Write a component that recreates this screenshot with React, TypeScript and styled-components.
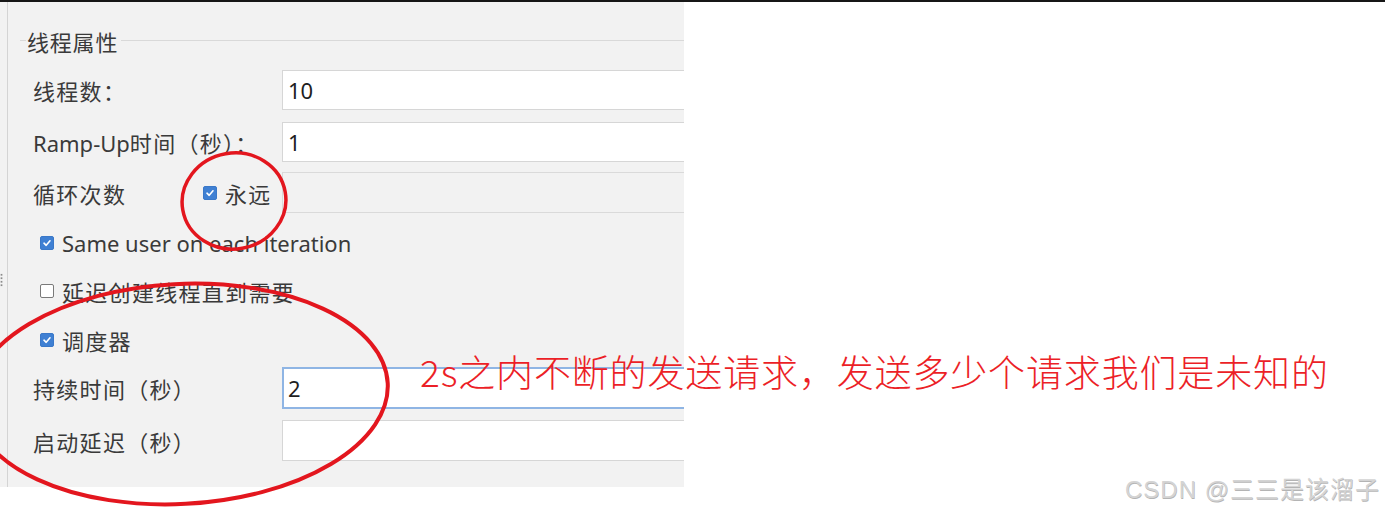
import React from "react";
import styled, { createGlobalStyle } from "styled-components";

const Global = createGlobalStyle`
  html, body { margin: 0; padding: 0; background: #ffffff; }
  body { font-family: "Noto Sans", "Noto Sans CJK SC", sans-serif; }
`;

const Page = styled.div`
  position: relative;
  width: 1385px;
  height: 511px;
  overflow: hidden;
  background: #ffffff;
`;

const TopBar = styled.div`
  height: 2px;
  background: #161616;
`;

const Panel = styled.div`
  position: relative;
  width: 684px;
  height: 485px;
  background: #f2f2f2;
  overflow: hidden;
  padding-left: 7px;
  box-sizing: border-box;
`;

const Grip = styled.div`
  position: absolute;
  left: 0;
  top: 271px;
  width: 3px;
  height: 14px;
  background-image: radial-gradient(circle, #8a8a8a 0.9px, transparent 1.2px);
  background-size: 3px 3.5px;
`;

const Inner = styled.div`
  height: 100%;
  border-left: 1px solid #d4d4d4;
  display: flex;
  flex-direction: column;
  font-family: "Noto Sans", "Noto Sans CJK SC", sans-serif;
  font-size: 22px;
  color: #3a3a3a;
`;

const Legend = styled.div`
  display: flex;
  align-items: center;
  height: 24px;
  margin-top: 28px;
  padding-left: 12px;
`;

const LegendLine = styled.div<{ $grow?: boolean }>`
  height: 1px;
  background: #d9d9d9;
  width: ${(p) => (p.$grow ? "auto" : "6px")};
  flex: ${(p) => (p.$grow ? 1 : "none")};
  margin-bottom: 3px;
`;

const LegendText = styled.span`
  padding: 0 3px 0 1px;
  line-height: 24px;
  white-space: nowrap;
  letter-spacing: 0.8px;
`;

const Cjk = styled.span`
  letter-spacing: 1.3px;
`;

const Row = styled.div<{ $h: number; $mt: number; $pl?: number }>`
  display: flex;
  align-items: center;
  height: ${(p) => p.$h}px;
  margin-top: ${(p) => p.$mt}px;
  padding-left: ${(p) => p.$pl ?? 25}px;
  white-space: nowrap;
`;

const Label = styled.span`
  width: 249px;
  flex: none;
  white-space: nowrap;
`;

const Field = styled.div<{ $variant?: "normal" | "focus" | "disabled" }>`
  flex: none;
  width: 500px;
  height: 100%;
  box-sizing: border-box;
  display: flex;
  align-items: center;
  padding-left: ${(p) => (p.$variant === "focus" ? 4 : 5)}px;
  color: #1e1e1e;
  font-size: 22px;
  background: ${(p) => (p.$variant === "disabled" ? "#f2f2f2" : "#ffffff")};
  border: ${(p) =>
    p.$variant === "focus"
      ? "2px solid #8fb5e4"
      : p.$variant === "disabled"
      ? "1px solid #dadada"
      : "1px solid #d6d6d6"};
`;

const Box = styled.span<{ $checked?: boolean }>`
  width: 14px;
  height: 14px;
  box-sizing: border-box;
  border-radius: 2px;
  flex: none;
  display: inline-flex;
  align-items: center;
  justify-content: center;
  background: ${(p) => (p.$checked ? "#3f80d3" : "#ffffff")};
  border: 1px solid ${(p) => (p.$checked ? "#3a78c8" : "#7a7a7a")};
`;

const CheckText = styled.span`
  margin-left: 8px;
`;

const Check = ({ checked }: { checked?: boolean }) => (
  <Box $checked={checked}>
    {checked && (
      <svg width="10" height="10" viewBox="0 0 10 10">
        <path d="M2 5.2 L4.2 7.3 L8 2.8" fill="none" stroke="#fff" strokeWidth="1.6" strokeLinecap="round" strokeLinejoin="round" />
      </svg>
    )}
  </Box>
);

const LoopCell = styled.div`
  width: 249px;
  flex: none;
  display: flex;
  align-items: center;
`;

const LoopLabel = styled.span`
  width: 170px;
  flex: none;
`;

const Annotations = styled.svg`
  position: absolute;
  left: 0;
  top: 0;
  pointer-events: none;
`;

const Note = styled.div`
  position: absolute;
  left: 420px;
  top: 344px;
  font-family: "Noto Sans CJK SC", sans-serif;
  font-weight: 300;
  font-size: 37px;
  color: #ec1f27;
  white-space: nowrap;
  letter-spacing: 0.85px;
`;

const Watermark = styled.div`
  position: absolute;
  right: 5px;
  bottom: 6px;
  font-family: "Liberation Sans", "Noto Sans CJK SC", sans-serif;
  font-size: 24px;
  color: #d4d4d4;
  text-shadow: 0.5px 0.5px 0.5px #b4b4b4;
  white-space: nowrap;
  letter-spacing: 1px;
`;

export default function App() {
  return (
    <Page>
      <Global />
      <TopBar />
      <Panel>
        <Grip />
        <Inner>
          <Legend>
            <LegendLine />
            <LegendText>线程属性</LegendText>
            <LegendLine $grow />
          </Legend>
          <Row $h={40} $mt={16}>
            <Label><Cjk>线程数：</Cjk></Label>
            <Field>10</Field>
          </Row>
          <Row $h={40} $mt={12}>
            <Label>Ramp-Up<Cjk>时间（秒）：</Cjk></Label>
            <Field>1</Field>
          </Row>
          <Row $h={41} $mt={10}>
            <LoopCell>
              <LoopLabel><Cjk>循环次数</Cjk></LoopLabel>
              <Check checked />
              <CheckText><Cjk>永远</Cjk></CheckText>
            </LoopCell>
            <Field $variant="disabled" />
          </Row>
          <Row $h={48} $mt={6} $pl={32}>
            <Check checked />
            <CheckText>Same user on each iteration</CheckText>
          </Row>
          <Row $h={48} $mt={0} $pl={32}>
            <Check />
            <CheckText><Cjk>延迟创建线程直到需要</Cjk></CheckText>
          </Row>
          <Row $h={49} $mt={0} $pl={32}>
            <Check checked />
            <CheckText><Cjk>调度器</Cjk></CheckText>
          </Row>
          <Row $h={42} $mt={3}>
            <Label><Cjk>持续时间（秒）</Cjk></Label>
            <Field $variant="focus">2</Field>
          </Row>
          <Row $h={41} $mt={11}>
            <Label><Cjk>启动延迟（秒）</Cjk></Label>
            <Field />
          </Row>
        </Inner>
      </Panel>
      <Annotations width="1385" height="511" viewBox="0 0 1385 511">
        <ellipse cx="234" cy="201" rx="52" ry="48" fill="none" stroke="#e3161e" strokeWidth="3.5" transform="rotate(-10 234 201)" />
        <ellipse cx="180" cy="394" rx="208" ry="110" fill="none" stroke="#e3161e" strokeWidth="4" transform="rotate(-3 180 394)" />
      </Annotations>
      <Note>2s之内不断的发送请求，发送多少个请求我们是未知的</Note>
      <Watermark>CSDN @三三是该溜子</Watermark>
    </Page>
  );
}
